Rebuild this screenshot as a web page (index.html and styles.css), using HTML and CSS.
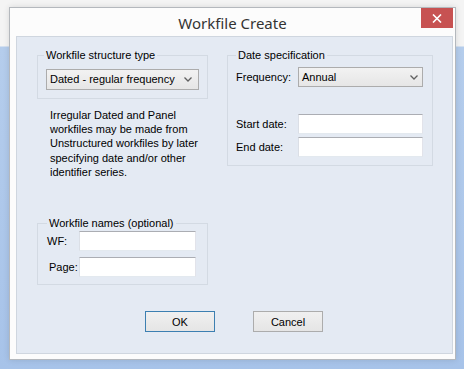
FILE: index.html
```html
<!DOCTYPE html>
<html>
<head>
<meta charset="utf-8">
<link rel="stylesheet" href="styles.css">
</head>
<body>
<div class="window">
  <div class="titlebar">
    <span class="title">Workfile Create</span>
    <div class="close"><svg width="10" height="9" viewBox="0 0 10 9"><path d="M1 0.5 L9 8.5 M9 0.5 L1 8.5" stroke="#fff" stroke-width="1.6"/></svg></div>
  </div>
  <div class="client">
    <div class="cols">
      <div class="col-left">
        <fieldset class="group g-struct">
          <legend>Workfile structure type</legend>
          <div class="combo combo-struct"><span>Dated - regular frequency</span><svg width="8" height="5" viewBox="0 0 8 5"><path d="M0.5 0.5 L4 4 L7.5 0.5" fill="none" stroke="#606060" stroke-width="1.3"/></svg></div>
        </fieldset>
        <p class="note">Irregular Dated and Panel<br>workfiles may be made from<br>Unstructured workfiles by later<br>specifying date and/or other<br>identifier series.</p>
        <fieldset class="group g-names">
          <legend>Workfile names (optional)</legend>
          <div class="row r-wf"><span class="lbl lbl-wf">WF:</span><div class="input in-name"></div></div>
          <div class="row r-page"><span class="lbl lbl-page">Page:</span><div class="input in-name"></div></div>
        </fieldset>
      </div>
      <div class="col-right">
        <fieldset class="group g-date">
          <legend>Date specification</legend>
          <div class="row r-freq"><span class="lbl lbl-date">Frequency:</span><div class="combo combo-freq"><span>Annual</span><svg width="8" height="5" viewBox="0 0 8 5"><path d="M0.5 0.5 L4 4 L7.5 0.5" fill="none" stroke="#606060" stroke-width="1.3"/></svg></div></div>
          <div class="row r-start"><span class="lbl lbl-date">Start date:</span><div class="input in-date"></div></div>
          <div class="row r-end"><span class="lbl lbl-date">End date:</span><div class="input in-date"></div></div>
        </fieldset>
      </div>
    </div>
    <div class="buttons">
      <div class="btn btn-default">OK</div>
      <div class="btn">Cancel</div>
    </div>
  </div>
</div>
</body>
</html>
```

FILE: styles.css
```css
html, body {
  margin: 0;
  padding: 0;
}
body {
  width: 464px;
  height: 369px;
  overflow: hidden;
  background: linear-gradient(to bottom, #f4f4f4 0, #f4f4f4 46px, #b5cdec 47px, #a7c3e9 369px);
  font-family: "Liberation Sans", Arial, sans-serif;
  font-size: 11px;
  color: #000;
}
.window {
  box-sizing: border-box;
  margin: 7px 0 0 9px;
  width: 447px;
  height: 353px;
  background: #fcfcfc;
  border: 1px solid #b4b8bd;
  padding: 0 2px 5px 6px;
  box-shadow: 0 0 6px rgba(0,0,0,0.12);
}
.titlebar {
  height: 28px;
  display: flex;
  justify-content: center;
  align-items: flex-start;
  position: relative;
}
.title {
  font-family: "Noto Sans", "Open Sans", sans-serif;
  font-size: 15px;
  line-height: 30px;
  color: #333;
  margin-left: -4px;
}
.close {
  position: absolute;
  right: 0;
  top: 0;
  width: 32px;
  height: 20px;
  background: #c75252;
  display: flex;
  align-items: center;
  justify-content: center;
}
.client {
  box-sizing: border-box;
  width: 437px;
  height: 318px;
  background: #e4eaf3;
  border: 1px solid #cfd6df;
  padding: 11px 19px 0 20px;
}
.cols {
  display: grid;
  grid-template-columns: 171px 206px;
  column-gap: 19px;
  align-items: start;
}
.col-left, .col-right {
  display: flex;
  flex-direction: column;
}
.group {
  margin: 0;
  border: 1px solid #d3dae3;
  padding: 0 8px 0 6px;
  min-width: 0;
}
.group legend {
  padding: 0 2px;
  line-height: 15px;
  height: 15px;
}
.g-struct {
  padding-top: 6px;
  padding-bottom: 8px;
  height: 51px;
  box-sizing: border-box;
}
.g-struct .combo {
  margin-left: 2px;
}
.combo {
  box-sizing: border-box;
  height: 21px;
  border: 1px solid #acacac;
  background: linear-gradient(to bottom, #f2f2f2, #e6e6e6);
  display: flex;
  align-items: center;
  justify-content: space-between;
  padding: 0 6px 0 3px;
  line-height: 19px;
}
.combo-struct {
  width: 153px;
}
.note {
  margin: 9px 0 0 13px;
  line-height: 14.2px;
}
.g-names {
  margin-top: 37px;
  padding: 0 0 7px 9px;
}
.row {
  display: flex;
  align-items: center;
}
.lbl-wf {
  width: 32px;
}
.lbl-page {
  width: 30px;
  margin-left: 2px;
}
.r-page {
  margin-top: 6px;
}
.input {
  box-sizing: border-box;
  height: 20px;
  background: #fff;
  border: 1px solid;
  border-color: #abadb3 #e2e3ea #e3e9ef #dbdfe6;
}
.in-name {
  width: 117px;
}
.g-date {
  padding: 4px 8px 8px 8px;
}
.lbl-date {
  width: 62px;
}
.combo-freq {
  width: 125px;
  height: 20px;
  padding-right: 4px;
}
.in-date {
  width: 125px;
}
.r-start {
  margin-top: 27px;
}
.r-end {
  margin-top: 3px;
}
.buttons {
  display: flex;
  justify-content: center;
  gap: 38px;
  margin-top: 26px;
  padding-right: 2px;
}
.btn {
  box-sizing: border-box;
  width: 70px;
  height: 21px;
  border: 1px solid #acacac;
  background: linear-gradient(to bottom, #f0f0f0, #e5e5e5);
  display: flex;
  align-items: center;
  justify-content: center;
}
.btn-default {
  border-color: #3c7fb1;
}
```
